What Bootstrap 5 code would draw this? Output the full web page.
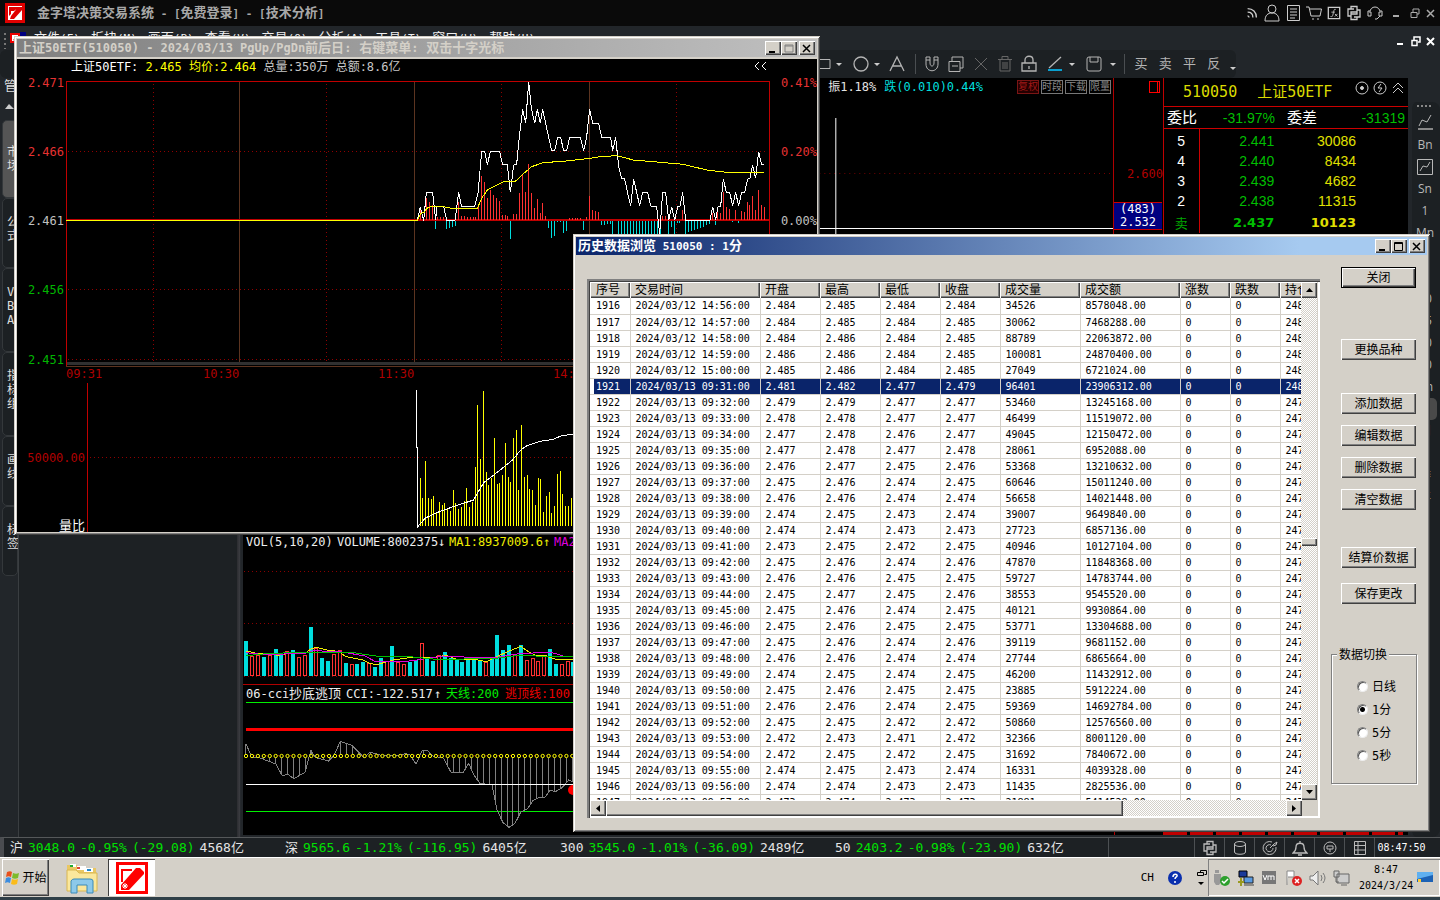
<!DOCTYPE html>
<html lang="zh-CN">
<head>
<meta charset="utf-8">
<meta name="viewport" content="width=device-width, initial-scale=1">
<title>金字塔决策交易系统</title>
<link href="https://cdn.jsdelivr.net/npm/bootstrap@5.3.0/dist/css/bootstrap.min.css" rel="stylesheet">
<script src="https://cdn.jsdelivr.net/npm/bootstrap@5.3.0/dist/js/bootstrap.bundle.min.js"></script>
<style>
:root{--face:#d4d0c8;--ink:#1d2124}
body{background:#22262a;font:12px/16px "DejaVu Sans Mono","Noto Sans CJK SC",monospace;color:#e4e4e4;white-space:nowrap;overflow:hidden}
.mn{font-size:11px}
.hz{font-size:13px}
.ic{fill:none;stroke:currentColor;display:block;flex:none}
button{font:inherit;color:inherit;background:none;border:0;padding:0}
a{color:inherit;text-decoration:none}
.appbar{background:#0a0a0a;height:26px;color:#a8a8a8}
.appname{font-size:13px;margin-left:11px}
.appicons{color:#ccc;gap:5px}
.menubar{height:24px}
.menus{gap:11px;color:#eee}
.tools{height:28px;background:#1c2023;width:1236px;padding-left:812px;color:#b4b4b4;border-radius:6px}
.dim{color:#666}
.t25{width:25px}.t28{width:28px}.vsep{width:1px;height:20px;background:#4a4e51;margin:0 4px}
.tri{border:3px solid transparent;border-top-color:#ccc;border-bottom:0;width:6px}
/* left tabs */
.lefttabs{width:18px;color:#ddd}
.ltab{width:16px;background:#1c2023;border:1px solid #34383b;border-radius:5px;white-space:normal;line-height:14px;padding:16px 0 0 4px;margin-left:2px;height:70px}
.ltab.tall{height:84px}
.ltab.cur{height:78px;background:#555;padding-top:24px}
.leftpane{width:219px;background:#1d2124;border-left:1px solid #3a3e41}
.splitter{width:6px;background:linear-gradient(90deg,#2b2c30,#3c3d42 50%,#22262a 60%)}
.black{background:#000}
.pane{margin-bottom:2px}
svg text{white-space:pre}
.amp{padding:1px 130px 0 0}
.axis{width:50px;border-left:1px solid #b00000;color:#b00000}
.axis .tick{padding-top:72px}
.price{background:#000080;color:#fff;border-top:1px solid #c00;border-bottom:1px solid #c00;line-height:13px;top:124px;width:48px}
.chips{gap:2px;right:2px;top:2px}
.chip{border:1px solid #777;color:#888;font-size:10px;line-height:12px;height:14px;width:22px;text-align:center}
.chip.hot{border-color:#7a1515;color:#a01818;background:#250000}
.quotes{width:245px;border-left:1px solid #c00000;font-family:"Liberation Sans","Noto Sans CJK SC",sans-serif;font-size:14px}
.qhead{height:28px;color:#dada00;font-family:"DejaVu Sans Mono","Noto Sans CJK SC",monospace;font-size:15px;padding-left:19px}
.qratio{height:23px;border-top:1px solid #c00;border-bottom:1px solid #c00;font-size:15px;color:#fff;padding:0 3px}
.qratio .qg{font-size:14px}
.qratio .w-a{width:78px;text-align:right}
.qg{color:#00be00}.qy{color:#e0e000}
.ladder td{height:20px;padding:3px 0 0}
.ladder td:first-child{width:35px;text-align:center;border-right:1px solid #c00;color:#fff;font-size:14px}
.ladder .last td{height:24px;font:bold 13px "DejaVu Sans","Noto Sans CJK SC",sans-serif}
.ladder .last td:first-child{color:#00a800;font-weight:400}
.ladder td:last-child{width:52px}
.rail{width:32px;background:#1c2023;border-left:4px solid #22262a;border-radius:8px;margin-top:24px;padding-top:8px;color:#b8b8b8;font-family:"Open Sans",sans-serif;font-size:12px}
.rail button{height:22px;width:28px;margin-left:-1px;display:flex;align-items:center;justify-content:center}
.rail .on{background:#4a4a4a;border-radius:5px;width:26px}
.redrow{height:3px;margin-right:5px;background:repeating-linear-gradient(90deg,#c00000 0 23px,#000 23px 26px)}
/* status bar */
.status{height:20px;background:var(--ink);border-top:1px solid #55585a;border-left:4px solid #4a4c50;font-size:13px}
.status .grp{width:275px;display:flex;gap:5px;padding-left:6px}
.status .up{color:#00e000}
.cell30{width:30px;border-left:1px solid #4c5053;display:flex;align-items:center;justify-content:center;color:#bbb}
.cell30.gapcell{width:86px}
.cell30.clock{width:66px;font-size:10px;padding-right:12px;color:#fff}
/* classic window look */
.win{position:absolute;background:var(--face);box-shadow:inset 1px 1px var(--face),inset -1px -1px #404040,inset 2px 2px #fff,inset -2px -2px #808080;padding:3px;color:#000}
.w-stock{left:14px;top:36px;width:806px;z-index:2}
.w-data{left:573px;top:234px;width:857px;height:598px;z-index:3}
.cap{height:18px;display:flex;align-items:center;font-weight:700;font-size:13px;padding:0 2px}
.cap.off{background:linear-gradient(90deg,#808080,#c0c0c0);color:var(--face);margin-bottom:2px}
.cap.off .mn{font-size:12px}
.cap.act{background:linear-gradient(90deg,#0a246a,#a6caf0 85%);color:#fff}
.bev{background:var(--face);color:#000;box-shadow:inset 1px 1px #fff,inset -1px -1px #404040,inset -2px -2px #808080;display:flex;align-items:center;justify-content:center}
.cap .bev{width:16px;height:14px}
.cap .bev:last-child{margin-left:2px}
.frame{width:733px;height:539px;margin:24px 0 0 11px;padding:3px;box-shadow:inset 2px 2px #808080,inset 3px 3px #404040,inset -2px -2px #fff}
.view{width:712px;height:518px;overflow:hidden;background:#fff}
.grid{table-layout:fixed;width:762px;font-size:10px;color:#000}
.grid th{height:16px;font-weight:400;font-size:12px;line-height:14px;padding:0 0 0 5px;background:var(--face);box-shadow:inset 1px 1px #fff,inset -1px -1px #404040,inset -2px -2px #808080;overflow:hidden}
.grid td{height:16px;line-height:15px;padding:0 0 0 5px;border-right:1px solid var(--face);border-bottom:1px solid var(--face)}
.grid tr>:first-child{padding-left:6px}
.grid .sel td{background:#0a246a;color:#fff}
.grid .sel td:first-child{background:linear-gradient(90deg,#fff 4px,#0a246a 4px)}
.track{background:repeating-conic-gradient(#fff 0 25%,var(--face) 0 50%) 0 0/2px 2px}
.vtrack{width:16px}.vthumb{height:8px;margin-top:240px}
.htrack{width:712px}.hthumb{width:517px}
.sb{width:16px;height:16px;flex:none}
.push{width:75px;height:21px;font-size:12px}
.push.dflt{outline:1px solid #000;outline-offset:-1px;box-shadow:inset 2px 2px #fff,inset -2px -2px #404040,inset -3px -3px #808080;margin-bottom:40px}
.side{width:86px;margin:12px 0 0 11px}
.side .stack{display:flex;flex-direction:column;gap:11px;margin-left:10px}
.gap-more{margin-bottom:22px}
.gap-most{margin-bottom:26px}
.grpbox{border:1px solid #808080;box-shadow:1px 1px #fff,inset 1px 1px #fff;height:130px;margin-top:50px;padding:20px 0 0 25px;position:relative}
.grpbox legend{position:absolute;left:5px;top:-8px;width:auto;background:var(--face);font-size:12px;line-height:16px;padding:0 2px;margin:0;float:none}
.grpbox label{display:flex;align-items:center;gap:4px;height:23px}
.grpbox input{appearance:none;width:11px;height:11px;border-radius:50%;margin:0;background:#fff;border:1px solid #808080;border-right-color:#eee;border-bottom-color:#eee;box-shadow:inset 1px 1px #555}
.grpbox input:checked{background:radial-gradient(circle,#000 2px,#fff 3px)}
/* taskbar */
.taskbar{height:40px;background:var(--face);border-top:1px solid #fff;color:#000;padding-left:2px}
.below{height:3px;background:#2f3f47}
.start{width:47px;height:37px}
.taskapp{width:47px;height:37px;margin-left:9px;background:#fff;box-shadow:inset 1px 1px #404040,inset -1px -1px #fff}
.lang{gap:14px}
.tray{height:37px;width:232px;box-shadow:inset 1px 1px #808080,inset -1px -1px #fff;padding-left:5px}
.date{font-size:10px;text-align:center}
</style>
</head>
<body class="vh-100 d-flex flex-column position-relative">

<header class="appbar d-flex align-items-center flex-shrink-0">
  <svg class="ms-1 flex-shrink-0" width="22" height="22" viewBox="0 0 22 22"><path fill="#e00000" d="M1 1h20v20H1z"/><path fill="#fff" d="M4 4h14v14H4z"/><path fill="#e00000" d="M5 5h10l-5 4H7v3l-2 2zM7 14 14 5h4v3l-8 9H6z"/></svg>
  <span class="appname fw-bold">金字塔决策交易系统<span class="mn"> - [</span>免费登录<span class="mn">] - [</span>技术分析<span class="mn">]</span></span>
  <div class="appicons ms-auto d-flex align-items-center pe-1">
    <svg class="ic" width="14" height="16" viewBox="0 0 16 16"><path stroke-width="1.500" d="M3 3c6 0 10 4 10 10M3 7c4 0 6 2 6 6M3 11l2 2"/></svg>
    <svg class="ic" width="16" height="18" viewBox="0 0 16 18"><circle cx="8" cy="5" r="4"/><path d="M1 17c0-6 3-8 7-8s7 2 7 8z"/></svg>
    <svg class="ic" width="16" height="18" viewBox="0 0 16 18"><path d="M2.500 1.500h12v15h-12zM5 5h7M5 8h7M5 11h7M5 14h5"/></svg>
    <svg class="ic" width="16" height="16" viewBox="0 0 16 16"><path d="M0 2h3l2 9h9l1.500-7H4M6 14h2M11 14h2"/></svg>
    <svg class="ic" width="14" height="16" viewBox="0 0 16 16"><path stroke-width="1.500" d="M1.500 1.500h13v13h-13z"/><path d="M10 4c-2-1-2 1-3 5s-1 3-3 3M5 7h4M9 9l3 3M12 9l-3 3"/></svg>
    <svg class="ic" width="16" height="16" viewBox="0 0 16 16"><path stroke-width="1.300" d="M5 4V1.500h6V7H5v2M8 4H2v7h3v0M11 12v2.500H5V9h6V7M8 12h6V5h-3"/></svg>
    <svg class="ic" width="16" height="16" viewBox="0 0 16 16"><path d="M3 8V7a5 5 0 0 1 10 0v1M3 6H1v5h3V7M13 6h2v5h-3V7M13 11l-3 3H8"/></svg>
    <svg class="ic ms-1" width="8" height="12" viewBox="0 0 8 12"><path stroke="#aaa" stroke-width="2" d="M1 9h6"/></svg>
    <svg class="ic ms-1" width="12" height="12" viewBox="0 0 12 12"><path stroke="#aaa" d="M4 5V2h6v5H8M2 5.500h6v5H2z"/></svg>
    <svg class="ic" width="10" height="12" viewBox="0 0 10 12"><path stroke="#aaa" stroke-width="1.500" d="m1 3 7 7M8 3l-7 7"/></svg>
  </div>
</header>

<nav class="menubar d-flex align-items-center flex-shrink-0">
  <svg class="flex-shrink-0" width="34" height="22"><path stroke="#777" stroke-dasharray="2 3" stroke-width="2" d="M5 6v16"/><path fill="#e00" d="M10 6h10v10H10z"/><path fill="#fff" d="M12 8h6v6h-6z"/><path fill="#e00" d="m13 13 4-4v2l-2 3z"/><path fill="#000080" d="M20 5h6v4h-6z"/></svg>
  <div class="menus d-flex hz">
    <a href="#">文件<span class="mn">(F)</span></a><a href="#">板块<span class="mn">(M)</span></a><a href="#">画面<span class="mn">(P)</span></a><a href="#">查看<span class="mn">(V)</span></a><a href="#">交易<span class="mn">(Q)</span></a><a href="#">分析<span class="mn">(A)</span></a><a href="#">工具<span class="mn">(T)</span></a><a href="#">窗口<span class="mn">(W)</span></a><a href="#">帮助<span class="mn">(H)</span></a>
  </div>
  <div class="ms-auto d-flex pe-1 align-self-end gap-1 text-white">
    <svg class="ic" width="12" height="14" viewBox="0 0 12 14"><path stroke-width="2" d="M3 8h6"/></svg>
    <svg class="ic" width="12" height="14" viewBox="0 0 12 14"><path stroke-width="1.500" d="M4 4V1h6v5H8M2 4.500h5v5H2z"/></svg>
    <svg class="ic" width="10" height="14" viewBox="0 0 10 14"><path stroke-width="2" d="m1 2 7 7M8 2 1 9"/></svg>
  </div>
</nav>

<div class="tools d-flex align-items-center flex-shrink-0">
  <button class="t25" aria-label="矩形"><svg class="ic" width="20" height="18"><path d="M4 4.500h14v9H4z"/></svg></button><i class="tri"></i>
  <button class="t28 d-flex justify-content-end" aria-label="圆"><svg class="ic" width="18" height="18"><circle cx="9" cy="9" r="7" stroke-width="1.300"/></svg></button><i class="tri ms-1"></i>
  <button class="t28 d-flex justify-content-center ms-1" aria-label="文字"><svg class="ic" width="18" height="18"><path stroke-width="1.300" d="M2 16 9 2l7 14M5 11h8"/></svg></button><i class="vsep"></i>
  <button class="t25 d-flex justify-content-center" aria-label="磁铁"><svg class="ic" width="16" height="18"><path d="M2 2h4v6c0 4 4 4 4 0V2h4v7c0 9-12 9-12 0zM2 5h4M10 5h4"/></svg></button>
  <button class="t25 d-flex justify-content-center" aria-label="复制"><svg class="ic" width="18" height="18"><path d="M2 6.500h11v10H2zM5 6V2h11v11h-3M5 11h6"/></svg></button>
  <button class="t25 d-flex justify-content-center dim" aria-label="关闭"><svg class="ic" width="16" height="18"><path d="m2 3 12 12M14 3 2 15"/></svg></button>
  <button class="t25 d-flex justify-content-center dim" aria-label="删除"><svg class="ic" width="16" height="18"><path d="M1 4.500h14M3 5v11h10V5M5 4V1.500h6V4M6 7v7M8 7v7M10 7v7"/></svg></button>
  <button class="t25 d-flex justify-content-center" aria-label="锁定"><svg class="ic" width="18" height="18"><path stroke-width="1.300" d="M2 8h14v8H2zM5 8V5c0-5 8-5 8 0v3M9 11v3"/></svg></button>
  <button class="t28 d-flex justify-content-center" aria-label="线色"><svg class="ic" width="16" height="18"><path stroke-width="1.300" d="M2 13 14 2"/><path stroke="#0aa0d0" stroke-width="2" d="M1 15h14"/></svg></button><i class="tri"></i>
  <button class="t28 d-flex justify-content-end" aria-label="保存"><svg class="ic" width="16" height="18"><rect x="1" y="2" width="14" height="14" rx="2"/><path d="M4 2v5h8V2"/></svg></button><i class="tri ms-2"></i>
  <i class="vsep ms-2"></i>
  <button class="t25 hz">买</button><button class="t25 hz">卖</button><button class="t25 hz">平</button><button class="t25 hz">反</button><i class="tri mt-2 ms-1"></i>
</div>

<main class="d-flex flex-grow-1 overflow-hidden">
  <aside class="lefttabs flex-shrink-0">
    <div class="hz ps-1">管</div>
    <svg class="d-block" width="18" height="26"><path fill="#ccc" d="M5 15h9L9 10z"/></svg>
    <div class="ltab cur">市场</div>
    <div class="ltab">公式</div>
    <div class="ltab tall">V<br>B<br>A</div>
    <div class="ltab tall">指标组</div>
    <div class="ltab">画线</div>
    <div class="ltab">标签</div>
  </aside>
  <div class="leftpane flex-shrink-0"></div>
  <div class="splitter flex-shrink-0"></div>

  <div class="pane d-flex flex-column flex-grow-1 black overflow-hidden">
    <div class="d-flex flex-grow-1 overflow-hidden">
      <div class="flex-grow-1 position-relative overflow-hidden">
        <div class="d-flex justify-content-end">
          <div class="amp"><span class="me-2">振1.18%</span><span style="color:#00dede">跌(0.010)0.44%</span></div>
          <div class="chips d-flex position-absolute"><span class="chip hot">复权</span><span class="chip">时段</span><span class="chip">下载</span><span class="chip">限量</span></div>
        </div>
        <svg class="position-absolute top-0 start-0 w-100 h-100" viewBox="243 78 871 454" preserveAspectRatio="none"><g fill="none" shape-rendering="crispEdges"><path stroke="#700000" stroke-dasharray="1 4" d="M820 173.500h294"/><path stroke="#fff" d="M836.500 118v116M820 228.500h294"/></g></svg>
      </div>
      <div class="axis flex-shrink-0 position-relative">
        <svg class="d-block" width="49" height="16"><path fill="none" stroke="#f00" shape-rendering="crispEdges" d="M35.500 3.500h10v11h-10zM43.500 3.500v11"/></svg>
        <div class="tick text-end">2.600</div>
        <div class="price position-absolute text-center">(483)<br>2.532</div>
      </div>
    </div>
    <svg class="flex-shrink-0 d-block" width="100%" height="303">
      <g transform="translate(-243 -532)">
        <g fill="none" shape-rendering="crispEdges">
          <path stroke="#8a0000" stroke-dasharray="1 3" d="M244 571.500h870M244 623.500h870M244 676.500h870"/>
          <path stroke="#b00000" d="M243 684.500h920M1114.500 532v303"/>
          <g id="vol" transform="translate(230 530) scale(.33333)"></g>
          <path stroke="#00f000" d="M246 702.500h868M246 811.500h868"/><path stroke="#f00" stroke-width="3" d="M246 729.500h868"/><path stroke="#8a0000" stroke-dasharray="1 3" d="M246 755.500h868"/>
          <g id="cci" transform="translate(230 530) scale(.33333)"></g>
          <path stroke="#fff" d="M246 784.500h868"/>
        </g>
        <circle cx="573" cy="790" r="5" fill="#f00"/>
        <g font-size="12">
          <text x="246" y="546" fill="#eee">VOL(5,10,20)</text><text x="337" y="546" fill="#eee">VOLUME:8002375</text><text x="438" y="546" fill="#eee">↓</text><text x="449" y="546" fill="#ee0">MA1:8937009.6</text><text x="543" y="546" fill="#ee0">↑</text><text x="554" y="546" fill="#d0d">MA2</text>
          <text x="246" y="698" fill="#eee">06-cci</text><text x="289" y="698" fill="#eee" font-size="13">抄底逃顶</text><text x="346" y="698" fill="#eee">CCI:-122.517</text><text x="434" y="698" fill="#eee">↑</text><text x="446" y="698" fill="#0e0">天线:200</text><text x="505" y="698" fill="#e00">逃顶线:100</text>
        </g>
      </g>
    </svg>
  </div>

  <section class="quotes pane black flex-shrink-0 d-flex flex-column">
    <div class="qhead d-flex align-items-center"><span>510050</span><span class="ms-3 ps-1">上证50ETF</span>
      <svg class="ic ms-auto mb-2" width="54" height="16" style="color:#ccc"><circle cx="8" cy="8" r="6"/><circle cx="8" cy="8" r="1.500" fill="#ccc"/><circle cx="26" cy="8" r="6"/><path d="m27 4-3 4h4l-3 4M39 8l5-5 5 5M39 13l5-5 5 5"/></svg></div>
    <div class="qratio d-flex align-items-center"><span>委比</span><span class="qg w-a">-31.97%</span><span class="ms-2 ps-1">委差</span><span class="qg ms-auto">-31319</span></div>
    <table class="ladder w-100 text-end"><tbody>
      <tr><td>5</td><td class="qg">2.441</td><td class="qy">30086</td><td></td></tr>
      <tr><td>4</td><td class="qg">2.440</td><td class="qy">8434</td><td></td></tr>
      <tr><td>3</td><td class="qg">2.439</td><td class="qy">4682</td><td></td></tr>
      <tr><td>2</td><td class="qg">2.438</td><td class="qy">11315</td><td></td></tr>
      <tr class="last"><td>卖</td><td class="qg">2.437</td><td class="qy">10123</td><td></td></tr>
    </tbody></table>
    <div class="redrow mt-auto"></div>
  </section>

  <aside class="rail flex-shrink-0">
    <svg class="ic" width="28" height="24" style="overflow:visible"><path stroke="#888" stroke-width="2" stroke-dasharray="2 2" d="M5-4h15"/><path d="m7 16 3-6 5 2 4-7" /><path stroke="#888" stroke-width="2" d="M6 19h15"/></svg>
    <button>Bn</button><button aria-label="走势"><svg class="ic" width="16" height="16"><path d="M.5.500h15v15H.5zM3 12l3-5 4 1 3-5"/></svg></button><button>Sn</button><button>1</button><button>Mn</button><button>3</button><button>5</button><button>10</button><button>15</button><button>30</button><button>60</button><button>Hn</button><button class="on">日</button><button>周</button><button>月</button><button>季</button><button>年</button>
  </aside>
</main>

<div class="status d-flex align-items-center flex-shrink-0">
  <div class="grp"><span>沪</span><span class="up">3048.0</span><span class="up">-0.95%</span><span class="up">(-29.08)</span><span>4568亿</span></div>
  <div class="grp"><span>深</span><span class="up">9565.6</span><span class="up">-1.21%</span><span class="up">(-116.95)</span><span>6405亿</span></div>
  <div class="grp"><span>300</span><span class="up">3545.0</span><span class="up">-1.01%</span><span class="up">(-36.09)</span><span>2489亿</span></div>
  <div class="grp"><span>50</span><span class="up">2403.2</span><span class="up">-0.98%</span><span class="up">(-23.90)</span><span>632亿</span></div>
  <div class="ms-auto d-flex align-self-stretch">
    <div class="cell30 gapcell"></div>
    <div class="cell30"><svg class="ic" width="16" height="16"><path stroke-width="1.300" d="M5 4V1.500h6V7H5v2M8 4H2v7h3M11 12v2.500H5V9h6V7M8 12h6V5h-3"/></svg></div>
    <div class="cell30"><svg class="ic" width="14" height="16"><ellipse cx="7" cy="4" rx="5.500" ry="2.500"/><path d="M1.500 4v8c0 3 11 3 11 0V4"/></svg></div>
    <div class="cell30"><svg class="ic" width="16" height="16"><path d="M10 2a6.500 6.500 0 1 0 4 5M9 5a3.500 3.500 0 1 0 2 3M8 8l4-4 3-2-1 3-3 1"/></svg></div>
    <div class="cell30"><svg class="ic" width="16" height="16"><path stroke-width="1.300" d="M8 1v2M1 13c3-2 3-4 3-6 0-5 8-5 8 0 0 2 0 4 3 6zM6 15h4"/></svg></div>
    <div class="cell30"><svg class="ic" width="16" height="16"><circle cx="8" cy="8" r="6"/><path d="M5 6h6v3H5zM8 9v3"/></svg></div>
    <div class="cell30"><svg class="ic" width="16" height="16"><path d="M2.500 1.500h11v13h-11zM2 5.500h12M2 10h12M6 2v12"/></svg></div>
    <div class="cell30 clock">08:47:50</div>
  </div>
</div>

<footer class="taskbar d-flex align-items-center flex-shrink-0">
  <button class="start bev"><svg width="18" height="18" viewBox="0 0 18 18"><path fill="#e8501c" d="M3 3c2-1 4-1 5 0L7 8C5 7 4 7 2 8z"/><path fill="#7dbb2c" d="M9 4c2 1 4 1 6 0l-1 5c-2 1-4 1-6 0z"/><path fill="#3b8de0" d="M2 9c2-1 3-1 5 0l-1 5c-2-1-3-1-5 0z"/><path fill="#fbbc1a" d="M8 10c2 1 4 1 6 0l-1 5c-2 1-4 1-6 0z"/></svg>开始</button>
  <button class="ms-3" aria-label="资源管理器"><svg class="d-block" width="34" height="34" viewBox="0 0 34 34"><path fill="#e9c763" d="M2 4h10l2 3h17v22H2z"/><path fill="#fff" d="M5 3h6v3H5zM12 5h9v4h-9zM19 7h9v4h-9z"/><path fill="#2a3" d="M5 4h3v2H5z"/><path fill="#d43" d="M12 6h3v2h-3z"/><path fill="#28c" d="M22 8h4v2h-4z"/><path fill="#fae79c" stroke="#d8b650" d="M2 9h9l3 3h18v18H2z"/><path fill="#8cc9ea" stroke="#3a8ab8" d="M6 20q1-2 3-2h16q3 0 3 2v12h-6v-8H12v8H6z"/></svg></button>
  <button class="taskapp d-flex align-items-center justify-content-center" aria-label="金字塔"><svg width="32" height="32" viewBox="0 0 32 32"><path fill="#f00" d="M0 0h32v32H0z"/><path fill="#fff" d="M3 3h26v26H3z"/><path fill="none" stroke="#f00" stroke-width="2" d="M16 8H6v12"/><path fill="#f00" d="M5 23 20 6h4l4 4v2L13 28H5z"/><path stroke="#fff" fill="none" d="M6 24h6M9 21v6M7 22l4 4M11 22l-4 4"/></svg></button>
  <div class="lang ms-auto d-flex align-items-center">
    <span class="mn">CH</span>
    <svg width="14" height="14"><circle cx="7" cy="7" r="7" fill="#0a2fae"/><path d="M5 6c0-4 5-3 4-1 0 1-2 1-2 3M7 10v2" fill="none" stroke="#fff" stroke-width="1.500"/></svg>
    <svg width="12" height="20"><path fill="none" stroke="#000" d="M4.500 4V2.500h6v4h-2M1.500 4.500h6v3h-6z"/><path d="M2 14h6l-3 3z"/></svg>
  </div>
  <div class="tray d-flex align-items-center">
    <svg class="flex-shrink-0 me-2" width="138" height="20" viewBox="0 0 138 20"><path fill="#999" d="M2 2h4v3H2zM1 6h7v8l-2 3H3l-2-3z"/><circle cx="12" cy="13" r="5" fill="#2da02d"/><path fill="none" stroke="#fff" stroke-width="1.500" d="m9 13 2 2 4-4"/>
    <path fill="#1a3a9a" stroke="#000" d="M26 3h8v6h-8z"/><path fill="#5a9ae0" stroke="#222" d="M31 9h9v6h-9z"/><path stroke="#9a9a20" d="M25 14h6M28 10v8" stroke-width="2"/><path stroke="#444" d="M31 17h10"/>
    <path fill="#777" d="M49 3h14v13H49z"/><path stroke="#fff" fill="none" d="m50 7 2 5 2-5M55 12V8h3v4M58 8h3v4"/>
    <path fill="#fff" stroke="#888" d="M74 17V3h7v6h-6"/><circle cx="84" cy="13" r="5" fill="#d22"/><path stroke="#fff" stroke-width="1.500" d="m82 11 4 4M86 11l-4 4"/>
    <path fill="#eee" stroke="#777" d="M97 8h3l5-5v14l-5-5h-3z"/><path fill="none" stroke="#777" d="M108 7q2 3 0 6M110 5q4 5 0 10"/>
    <path fill="#ccc" stroke="#666" d="M124 6h12v9h-12zM121 3h5v6h-5zM123 9v5h3M128 17h6"/></svg>
    <div class="date">8:47<br>2024/3/24</div>
    <svg class="ms-1" width="16" height="14"><path fill="#1c62b5" d="M0 1h16v10H0z"/><path fill="#5fb0f0" d="M0 1h16v3L0 8z"/><path fill="#fc3" d="M1 8h3v3H1z"/></svg>
  </div>
</footer>
<div class="below flex-shrink-0"></div>

<section class="win w-stock">
  <div class="cap off"><span>上证<span class="mn">50ETF(510050) - 2024/03/13 PgUp/PgDn</span>前后日<span class="mn">:</span> 右键菜单<span class="mn">:</span> 双击十字光标</span>
    <div class="ms-auto d-flex"><button class="bev" aria-label="最小化"><svg width="10" height="9"><path d="M1 7h6v2H1z"/></svg></button><button class="bev" aria-label="最大化"><svg width="10" height="9"><path fill="none" stroke="#808080" d="M1 1h8v7H1zM1 2h8"/></svg></button><button class="bev" aria-label="关闭"><svg width="10" height="9"><path stroke="#000" stroke-width="1.500" d="m1 1 7 7M8 1 1 8"/></svg></button></div>
  </div>
  <svg class="d-block w-100 black" viewBox="17 59 800 473">
    <g fill="none" shape-rendering="crispEdges">
      <path stroke="#900000" stroke-dasharray="1 3" d="M153.500 84v280M326.500 84v280M501.500 84v280M676.500 84v280M68 151.500h700M68 289.500h700M68 359.500h700M90 457.500h727"/>
      <path stroke="#5c3420" d="M239.500 82v283M414.500 82v283M589.500 82v283M66 366.500h704"/>
      <path stroke="#303030" stroke-width="3" d="M67 363.500h703"/>
      <path stroke="#c00000" d="M66.500 366V81.500h703V366M87.500 383v149"/>
      <path stroke="#c00000" stroke-width="2" d="M66 220h704"/>
      <g id="px" transform="translate(400 30) scale(.33333)"></g>
      <g id="pv" transform="translate(0 280) scale(.37 .33333)"></g>
      <path stroke="#ff0" d="M66 220.500h351"/>
      <path stroke="#fff" d="m759 62-4 4 4 4M766 62l-4 4 4 4"/>
    </g>
    <g font-size="12">
      <text x="71" y="71" fill="#fff">上证50ETF: <tspan fill="#ff0">2.465 均价:2.464</tspan><tspan fill="#c8c8c8"> 总量:350万 总额:8.6亿</tspan></text>
      <g text-anchor="end"><g fill="#e63232"><text x="64" y="87">2.471</text><text x="64" y="156">2.466</text><text x="817" y="87">0.41%</text><text x="817" y="156">0.20%</text></g>
      <g fill="#c0c0c0"><text x="64" y="225">2.461</text><text x="817" y="225">0.00%</text></g>
      <g fill="#00b400"><text x="64" y="294">2.456</text><text x="64" y="364">2.451</text></g><text x="85" y="462" fill="#b00000">50000.00</text><text x="85" y="530" fill="#fff" font-size="13">量比</text></g>
      <g fill="#b00000"><text x="66" y="378">09:31</text><text x="203" y="378">10:30</text><text x="378" y="378">11:30</text><text x="553" y="378">14:00</text></g>
    </g>
  </svg>
</section>

<section class="win w-data">
  <div class="cap act"><span>历史数据浏览<span class="mn"> 510050 : 1</span>分</span>
    <div class="ms-auto d-flex"><button class="bev" aria-label="最小化"><svg width="10" height="9"><path d="M1 7h6v2H1z"/></svg></button><button class="bev" aria-label="最大化"><svg width="10" height="9"><path fill="none" stroke="#000" d="M.5.500h8v8h-8zM1 1.500h8"/></svg></button><button class="bev" aria-label="关闭"><svg width="10" height="9"><path stroke="#000" stroke-width="1.500" d="m1 1 7 7M8 1 1 8"/></svg></button></div>
  </div>
  <div class="d-flex align-items-start">
    <div class="frame flex-shrink-0">
      <div class="d-flex">
        <div class="view">
          <table class="grid"><colgroup><col width="40"><col width="130"><col width="60"><col width="60"><col width="60"><col width="60"><col width="80"><col width="100"><col width="50"><col width="50"><col></colgroup>
            <thead><tr><th>序号</th><th>交易时间</th><th>开盘</th><th>最高</th><th>最低</th><th>收盘</th><th>成交量</th><th>成交额</th><th>涨数</th><th>跌数</th><th>持仓</th></tr></thead>
            <tbody id="rows"></tbody></table>
        </div>
        <div class="track vtrack d-flex flex-column">
          <button class="bev sb" aria-label="向上"><svg width="7" height="4"><path d="M0 4h7L3.500 0z"/></svg></button>
          <div class="bev vthumb"></div>
          <button class="bev sb mt-auto" aria-label="向下"><svg width="7" height="4"><path d="M0 0h7L3.500 4z"/></svg></button>
        </div>
      </div>
      <div class="track htrack d-flex">
        <button class="bev sb" aria-label="向左"><svg width="4" height="7"><path d="M4 0v7L0 3.500z"/></svg></button>
        <div class="bev hthumb"></div>
        <button class="bev sb ms-auto" aria-label="向右"><svg width="4" height="7"><path d="M0 0v7l4-3.500z"/></svg></button>
      </div>
    </div>
    <div class="side">
      <div class="stack">
        <button class="bev push dflt">关闭</button>
        <button class="bev push gap-more">更换品种</button>
        <button class="bev push">添加数据</button>
        <button class="bev push">编辑数据</button>
        <button class="bev push">删除数据</button>
        <button class="bev push gap-most">清空数据</button>
        <button class="bev push">结算价数据</button>
        <button class="bev push mt-1">保存更改</button>
      </div>
      <fieldset class="grpbox"><legend>数据切换</legend>
        <label><input type="radio" name="p">日线</label><label><input type="radio" name="p" checked>1分</label><label><input type="radio" name="p">5分</label><label><input type="radio" name="p">5秒</label>
      </fieldset>
    </div>
  </div>
</section>

<script>
// minute bars: open high low close volume amount, prices in thousandths above 2.4
const bars = `84 85 84 84 34526 8578048
84 85 84 85 30062 7468288
84 86 84 85 88789 22063872
86 86 84 85 100081 24870400
85 86 84 85 27049 6721024
81 82 77 79 96401 23906312
79 79 77 77 53460 13245168
78 78 77 77 46499 11519072
77 78 76 77 49045 12150472
77 78 77 78 28061 6952088
76 77 75 76 53368 13210632
75 76 74 75 60646 15011240
76 76 74 74 56658 14021448
74 75 73 74 39007 9649840
74 74 73 73 27723 6857136
73 75 72 75 40946 10127104
75 76 74 76 47870 11848368
76 76 75 75 59727 14783744
75 77 75 76 38553 9545520
75 76 74 75 40121 9930864
75 76 75 75 53771 13304688
75 76 74 76 39119 9681152
76 76 74 74 27744 6865664
74 75 74 75 46200 11432912
75 76 75 75 23885 5912224
76 76 74 75 59369 14692784
75 75 72 72 50860 12576560
72 73 71 72 32366 8001120
72 75 72 75 31692 7840672
74 75 73 74 16331 4039328
74 74 73 73 11435 2825536
73 74 73 73 21881 5414528`.split('\n');
document.getElementById('rows').innerHTML = bars.map((line, i) => {
  const v = line.split(' ');
  const time = i < 4 ? '2024/03/12 14:' + (56 + i) : i === 4 ? '2024/03/12 15:00' : '2024/03/13 09:' + (26 + i);
  const cells = [1916 + i, time + ':00', ...v.slice(0, 4).map(p => '2.4' + p), v[4], v[5] + '.00', 0, 0, i < 6 ? 248 : 247];
  return `<tr${i === 5 ? ' class="sel"' : ''}>` + cells.map(c => `<td>${c}</td>`).join('') + '</tr>';
}).join('');

const line = (pts, c) => `<polyline points="${pts}" stroke="${c}" fill="none" vector-effect="non-scaling-stroke"/>`;
const sticks = (list, base, c, w = 3) => list.split(' ').map(s => { const [x, y] = s.split(':').map(Number); return `<rect x="${x - w / 2}" y="${Math.min(y, base)}" width="${w}" height="${Math.abs(base - y)}" fill="${c}"/>`; }).join('');

// intraday price, average and strength sticks
const down = Array.from({length: 15}, (_, i) => (656 + i * 9) + ':615').join(' ');
document.getElementById('px').innerHTML =
  sticks('61:540 79:505 88:515 97:525 113:562 122:561 131:561 176:515 185:558 193:558 203:560 212:561 220:561 227:562 236:525 245:438 254:456 262:503 271:480 280:495 290:503 299:513 308:555 317:555 323:558 341:552 349:552 358:489 368:436 377:486 386:402 395:489 403:534 412:507 421:549 428:519 436:558 509:564 517:564 526:564 533:564 541:564 560:560 569:498 578:540 587:543 596:546 788:558 797:558 848:540 938:550 954:546 962:549 970:487 979:530 989:537 1007:540 1025:543 1034:545 1043:516 1050:525 1058:498 1067:540 1076:480 1085:525 1094:530', 571, '#ff3232') +
  sticks('107:597 140:597 149:593 158:590 167:587 331:627 446:594 455:624 464:618 473:576 482:576 491:609 500:603 551:600 605:585 614:585 623:582 632:582 638:615 806:615 815:590 824:615 833:580 840:578 857:612 866:606 875:603 884:600 893:597 902:594 911:590 920:585 930:582 947:585 998:576 1016:579 ' + down, 573, '#00dede') +
  line('52,571 61,530 71,573 79,487 98,487 107,571 110,530 131,530 140,571 165,571 176,487 185,530 224,530 234,490 245,365 254,365 262,405 271,365 299,365 308,405 322,405 331,487 341,405 350,402 358,320 368,238 377,280 386,155 394,235 404,280 412,238 421,280 428,238 437,280 455,363 464,363 473,322 482,322 491,363 500,363 509,322 541,322 551,363 560,320 569,238 578,280 596,280 605,322 632,322 638,363 647,322 656,410 665,445 674,447 683,490 692,528 701,447 710,487 719,528 728,487 743,487 752,528 770,530 779,612 788,487 797,487 806,571 815,530 824,571 833,530 840,528 848,487 857,571 930,571 938,530 947,571 954,530 962,528 970,447 979,487 989,487 998,528 1007,487 1016,528 1025,487 1034,487 1043,447 1050,445 1058,405 1067,445 1076,365 1085,405 1092,405', '#fff') +
  line('0,571 52,571 62,550 72,548 80,535 98,528 130,530 165,537 232,535 245,505 262,480 290,465 310,455 345,455 368,433 395,410 430,398 500,393 569,385 600,380 650,377 700,390 760,395 850,403 920,420 980,427 1092,427', '#ff0');

document.getElementById('pv').innerHTML =
  sticks('1136:594 1142:654 1150:543 1158:654 1166:657 1172:648 1180:696 1188:666 1196:675 1201:669 1209:687 1217:693 1226:630 1231:669 1239:687 1247:681 1255:663 1261:624 1269:681 1277:666 1285:561 1291:375 1299:537 1307:333 1315:576 1320:615 1328:594 1337:474 1345:612 1350:609 1358:585 1366:489 1374:591 1380:606 1388:474 1396:450 1401:630 1409:435 1418:591 1426:585 1431:627 1439:630 1447:675 1455:594 1461:597 1469:696 1477:648 1485:636 1491:699 1499:678 1507:582 1515:573 1520:642 1528:678 1537:678 1545:654', 738, '#ff0', 2.7) +
  line('1127,330 1127,504 1129,504 1129,740 1150,714 1180,698 1225,680 1280,660 1307,608 1345,576 1385,540 1409,508 1426,496 1460,484 1495,478 1520,466 1555,463', '#fff');

// daily volume with three averages
const vols = '48:c333 66:r381 84:r378 102:c381 120:r376 138:c357 153:c375 171:r364 189:c360 207:r384 225:r376 243:c291 259:r355 276:c384 294:c393 312:r373 330:r361 348:c399 366:r403 381:c402 399:c396 417:r400 435:c411 453:c384 471:r396 486:c348 504:r397 522:r405 540:c396 558:c391 576:r340 591:c385 609:c393 627:r376 645:c366 663:c384 681:c390 696:c396 714:c387 732:c390 750:c391 768:r397 786:c387 801:c315 819:c360 837:c345 855:r373 873:c345 891:r391 909:r385 924:r394 942:r379 960:c357 978:c402 996:r403 1014:r394 1029:c396';
document.getElementById('vol').innerHTML = vols.split(' ').map(s => {
  const [x, d] = s.split(':'), y = +d.slice(1);
  return d[0] === 'c' ? `<rect x="${x - 6}" y="${y}" width="12" height="${438 - y}" fill="#00dede"/>` : `<rect x="${x - 4.5}" y="${y}" width="9" height="${436 - y}" fill="#000" stroke="#ff3232" stroke-width="3"/>`;
}).join('') +
  line('48,363 80,370 120,372 145,376 190,367 225,370 243,357 259,352 290,360 325,364 348,380 400,390 420,400 440,404 490,390 530,384 600,384 650,376 680,388 735,388 770,395 800,380 840,362 873,349 895,365 920,378 950,378 975,387 1028,390', '#ee0') +
  line('48,368 100,374 225,370 250,362 330,365 405,378 435,394 520,395 560,390 640,378 740,383 790,384 860,372 960,366 1000,378 1028,380', '#d0d') +
  line('48,377 120,370 200,368 260,367 370,368 450,380 540,380 620,388 790,386 860,377 1028,380', '#00c000');

// CCI curve, its sticks down to the zero line, and the zero markers
const cci = '48,642 56,660 66,684 90,684 138,702 156,736 175,734 192,746 225,727 243,660 255,682 295,693 312,676 331,634 366,646 384,664 402,684 420,667 455,676 505,677 525,671 540,674 558,702 577,661 592,661 609,678 640,684 663,727 700,727 716,700 732,736 750,760 786,765 801,840 819,878 837,892 855,880 873,845 891,838 909,812 925,803 943,804 960,782 978,784 996,773 1016,750 1028,755';
const pts = cci.split(' ').map(p => p.split(',').map(Number));
const at = x => { for (let i = 1; i < pts.length; i++) if (x <= pts[i][0]) { const [a, b] = pts[i - 1], [c, d] = pts[i]; return b + (d - b) * (x - a) / (c - a); } return 755; };
let marks = '', stems = [];
for (let i = 0; i < 56; i++) { const x = 48 + i * 17.8; stems.push(x + ':' + at(x)); marks += `<circle cx="${x}" cy="678" r="5" stroke="#ff0" stroke-width="3" fill="#000" shape-rendering="auto"/>`; }
document.getElementById('cci').innerHTML = sticks(stems.join(' '), 678, '#808080') + line(cci, '#808080') + marks;
</script>
</body>
</html>
